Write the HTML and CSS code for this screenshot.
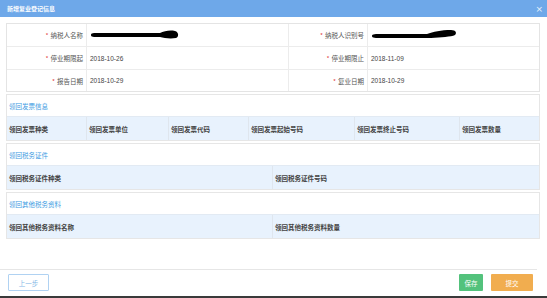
FILE: index.html
```html
<!DOCTYPE html>
<html>
<head>
    <title>新增复业登记信息</title>
    <link rel="stylesheet" href="styles.css">
</head>

<body>
    <div class="dialog">
        <div class="dialog-head">
            <span class="dialog-title">新增复业登记信息</span>
            <span class="dialog-close">×</span>
        </div>

        <div class="dialog-body">
            <!-- 基本信息 -->
            <div class="info-table">
                <div class="info-label"><i>*</i>纳税人名称</div>
                <div class="info-value">
                    <svg class="blot" width="90" height="10" viewBox="0 0 90 10">
                        <path d="M1 5 C1 3 3 3 10 3 L70 3 C74 1 80 0 85 1 C89 2 89 7 86 8 C80 9 74 8 70 7 L10 7 C3 7 1 7 1 5 Z" fill="#000"/>
                    </svg>
                </div>
                <div class="info-label"><i>*</i>纳税人识别号</div>
                <div class="info-value">
                    <svg class="blot" width="86" height="10" viewBox="0 0 86 10">
                        <path d="M1 6 C1 4 4 4 12 4 L56 4 C62 2 70 0 80 0 C85 0 86 3 84 5 C80 7 70 7 60 8 L12 8 C4 8 1 8 1 6 Z" fill="#000"/>
                    </svg>
                </div>

                <div class="info-label"><i>*</i>停业期限起</div>
                <div class="info-value">2018-10-26</div>
                <div class="info-label"><i>*</i>停业期限止</div>
                <div class="info-value">2018-11-09</div>

                <div class="info-label"><i>*</i>报告日期</div>
                <div class="info-value">2018-10-29</div>
                <div class="info-label"><i>*</i>复业日期</div>
                <div class="info-value">2018-10-29</div>
            </div>

            <!-- 领回发票信息 -->
            <div class="section">
                <div class="section-title">领回发票信息</div>
                <div class="grid-head cols-6">
                    <div>领回发票种类</div>
                    <div>领回发票单位</div>
                    <div>领回发票代码</div>
                    <div>领回发票起始号码</div>
                    <div>领回发票终止号码</div>
                    <div>领回发票数量</div>
                </div>
            </div>

            <!-- 领回税务证件 -->
            <div class="section">
                <div class="section-title">领回税务证件</div>
                <div class="grid-head cols-2">
                    <div>领回税务证件种类</div>
                    <div>领回税务证件号码</div>
                </div>
            </div>

            <!-- 领回其他税务资料 -->
            <div class="section">
                <div class="section-title">领回其他税务资料</div>
                <div class="grid-head cols-2">
                    <div>领回其他税务资料名称</div>
                    <div>领回其他税务资料数量</div>
                </div>
            </div>
        </div>

        <div class="dialog-foot">
            <button class="btn btn-prev">上一步</button>
            <div class="foot-right">
                <button class="btn btn-save">保存</button>
                <button class="btn btn-submit">提交</button>
            </div>
        </div>
    </div>
    <div class="taskbar"></div>
</body>
</html>
```

FILE: styles.css
```css
html, body {
    margin: 0;
    padding: 0;
}

body {
    font-family: "Noto Sans CJK SC", "Liberation Sans", sans-serif;
    font-size: 6.5px;
    color: #333;
    background-color: #fff;
    width: 547px;
    height: 298px;
    display: flex;
    flex-direction: column;
    overflow: hidden;
}

.dialog {
    flex: 1;
    display: flex;
    flex-direction: column;
}

.dialog-head {
    height: 17px;
    background-color: #6ea8e9;
    color: #fff;
    display: flex;
    align-items: center;
    justify-content: space-between;
    padding: 0 4px 0 7px;
}

.dialog-title {
    font-weight: bold;
    font-size: 6px;
}

.dialog-close {
    font-family: "DejaVu Sans", sans-serif;
    font-size: 9px;
    color: #e8f2fc;
}

.dialog-body {
    flex: 1;
    padding: 6px 7px 0 6px;
}

.info-table {
    display: grid;
    grid-template-columns: 80px 202px 79px 1fr;
    border: 1px solid #e4e4e4;
}

.info-label,
.info-value {
    height: 22px;
    display: flex;
    align-items: center;
    border-bottom: 1px solid #ececec;
    border-right: 1px solid #ececec;
}

.info-table > div:nth-last-child(-n+4) {
    border-bottom: none;
    height: 21px;
}

.info-table > div:nth-child(4n) {
    border-right: none;
}

.info-label {
    justify-content: flex-end;
    padding-right: 3px;
    color: #555;
}

.info-label i {
    font-style: normal;
    color: #e23c3c;
    margin-right: 2px;
}

.info-value {
    padding-left: 3px;
    font-family: "Liberation Sans", "Noto Sans CJK SC", sans-serif;
    font-size: 6.5px;
    color: #444;
}

.blot {
    display: block;
}

.section {
    margin-top: 2px;
    border: 1px solid #e6e6e6;
}

.section-title {
    height: 21px;
    display: flex;
    align-items: center;
    padding-left: 2px;
    color: #3d9be2;
}

.grid-head {
    display: grid;
    height: 23px;
    background-color: #e8f2fd;
    border-top: 1px solid #e2eaf3;
    font-weight: bold;
    color: #444;
}

.grid-head > div {
    display: flex;
    align-items: center;
    padding-left: 2px;
    border-right: 1px solid #dfe6ee;
}

.grid-head > div:last-child {
    border-right: none;
}

.cols-6 {
    grid-template-columns: 80px 82px 80px 106px 105px 1fr;
}

.cols-2 {
    grid-template-columns: 266px 1fr;
}

.dialog-foot {
    margin-right: 10px;
    border-top: 1px solid #e6e6e6;
    height: 27px;
    display: flex;
    align-items: flex-start;
    justify-content: space-between;
    padding: 4px 4px 0 8px;
    box-sizing: border-box;
}

.foot-right {
    display: flex;
    gap: 8px;
}

.btn {
    height: 17px;
    border-radius: 1px;
    font-family: "Noto Sans CJK SC", sans-serif;
    font-size: 6.5px;
    padding: 0;
    cursor: pointer;
}

.btn-prev {
    width: 41px;
    background-color: #fff;
    border: 1px solid #b0d2f2;
    color: #86b8e6;
}

.btn-save {
    width: 24px;
    background-color: #53c27c;
    border: none;
    color: #fff;
}

.btn-submit {
    width: 42px;
    background-color: #f1ad4f;
    border: none;
    color: #fff;
}

.taskbar {
    height: 2px;
    background-color: #3a3a3a;
}
```
